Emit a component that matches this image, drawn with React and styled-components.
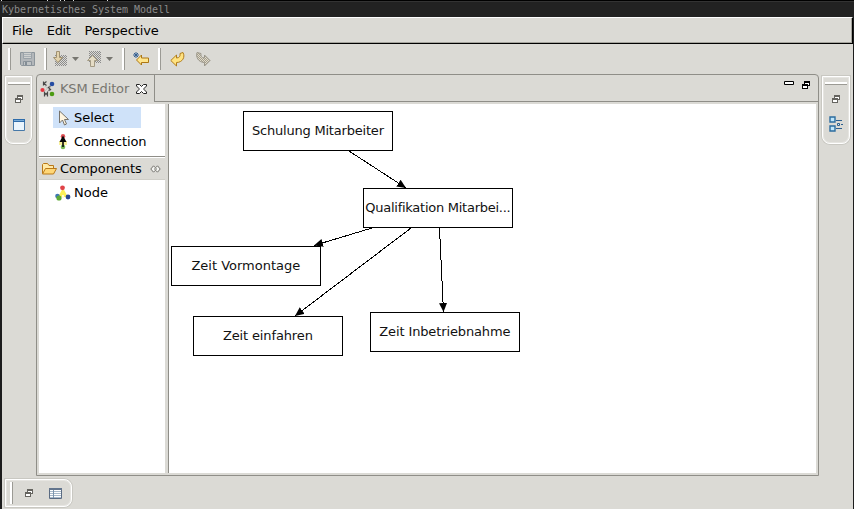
import React from "react";
import styled, { createGlobalStyle, css } from "styled-components";

const face = "#dbdad5";
const shade = "#8f8e88";

const GlobalStyle = createGlobalStyle`
  * { box-sizing: border-box; }
  body { margin: 0; overflow: hidden; background: #222; }
  svg { display: block; flex: none; }
`;

const Window = styled.div`
  width: 854px;
  height: 509px;
  display: flex;
  flex-direction: column;
  padding: 0 1px 0 2px;
  background: #1c1c1c;
  color: #000;
  font: 13px/16px "DejaVu Sans", sans-serif;
  white-space: nowrap;
`;

const TitleBar = styled.header`
  height: 17px;
  flex: none;
  margin: 0 -1px 0 -2px;
  padding: 4px 2px 0;
  box-shadow: inset 0 1px 0 #000;
  background: linear-gradient(#333 2px, #222 2px);
  color: #8b8b8b;
  font: 10px/12px "DejaVu Sans Mono", monospace;
  letter-spacing: -0.02px;
`;

/* Descender tips of the console line hidden behind the window. */
const ConsoleTips = styled.svg`
  margin: -4px 0 3px -2px;
`;

const MenuBar = styled.nav`
  height: 27px;
  flex: none;
  display: flex;
  align-items: center;
  gap: 14px;
  padding: 0 9px;
  background: ${face};
  border: 1px solid #fff;
  border-right-color: #000;
  border-bottom-color: #000;
  box-shadow: inset -1px -1px 0 #a5a49d;
`;

const MenuItem = styled.span`
  letter-spacing: ${(p) => p.$track || 0}px;
`;

const Workbench = styled.main`
  flex: 1;
  min-height: 0;
  display: flex;
  flex-direction: column;
  background: ${face};
`;

const ToolBar = styled.div`
  height: 30px;
  flex: none;
  display: flex;
  align-items: center;
  padding-left: 6px;
`;

const Separator = styled.i`
  width: 3px;
  height: 22px;
  margin-left: ${(p) => p.$before || 0}px;
  margin-right: ${(p) => p.$after}px;
  background: linear-gradient(90deg, #fff 2px, #9b9a94 2px);
`;

const ToolButton = styled.span`
  width: ${(p) => p.$width}px;
  height: 18px;
  display: flex;
  align-items: center;
  gap: 3px;
`;

const Middle = styled.div`
  height: 402px;
  flex: none;
  display: flex;
`;

const Trim = styled.aside`
  display: flex;
  flex: none;
  align-items: center;
  border: 1px solid #fff;
  box-shadow: 0 0 0 1px #c9c8c2, inset 0 0 0 1px #e6e5e1;
  ${(p) =>
    p.$horizontal
      ? css`
          width: 67px;
          height: 28px;
          margin: 3px 0 0 3px;
          padding-left: 4px;
          border-radius: 0 8px 8px 0;
        `
      : css`
          flex-direction: column;
          width: ${p.$width}px;
          height: 68px;
          margin: 2px 4px 0 3px;
          padding-top: 5px;
          border-radius: 0 0 8px 8px;
        `}
`;

const Grip = styled.i`
  flex: none;
  ${(p) =>
    p.$horizontal
      ? css`
          width: 3px;
          height: 22px;
          margin-right: 12px;
          background: linear-gradient(90deg, #fff 2px, #9b9a94 2px);
        `
      : css`
          width: 22px;
          height: 3px;
          margin-bottom: 10px;
          background: linear-gradient(#fff 2px, #9b9a94 2px);
        `}
`;

const TrimIcon = styled.span`
  margin: ${(p) => p.$margin || "0"};
`;

const Editor = styled.section`
  width: 783px;
  height: 402px;
  flex: none;
  display: flex;
  flex-direction: column;
  border: 1px solid ${shade};
  border-radius: 4px 4px 0 0;
`;

const TabStrip = styled.div`
  height: 27px;
  flex: none;
  display: flex;
`;

const Tab = styled.div`
  width: 118px;
  display: flex;
  align-items: center;
  padding-left: 3px;
  color: #77766f;
  border-right: 1px solid ${shade};
`;

const TabLabel = styled.span`
  margin: 0 6px 0 4px;
  width: 70px;
  letter-spacing: -0.15px;
`;

const TabFiller = styled.div`
  flex: 1;
  display: flex;
  justify-content: flex-end;
  gap: 8px;
  padding: 6px 8px 0 0;
  border-bottom: 1px solid ${shade};
`;

const EditorBody = styled.div`
  flex: 1;
  min-height: 0;
  display: flex;
  padding: 2px;
`;

const Palette = styled.div`
  width: 126px;
  background: #fff;
  padding-top: 3px;
`;

const PaletteItem = styled.div`
  height: ${(p) => p.$height || 21}px;
  width: ${(p) => p.$width || 110}px;
  margin-left: 14px;
  padding-left: 2px;
  display: flex;
  align-items: center;
  gap: 3px;
  letter-spacing: ${(p) => p.$track || 0}px;
  background: ${(p) => (p.$selected ? "#cfe2f9" : "transparent")};
`;

const Drawer = styled.div`
  height: 24px;
  margin: 1px 0 2px;
  padding: 1px 4px 0 2px;
  display: flex;
  align-items: center;
  background: ${face};
  border-top: 1px solid ${shade};
  border-bottom: 1px solid #cfcec8;
  box-shadow: inset 0 1px 0 #fff;
`;

const DrawerLabel = styled.span`
  flex: 1;
  margin-left: 3px;
  letter-spacing: -0.05px;
`;

const Canvas = styled.div`
  position: relative;
  width: 649px;
  margin-left: 3px;
  border-left: 1px solid ${shade};
  background: #fff;
`;

const Edges = styled.svg`
  position: absolute;
  left: 0;
  top: 0;
`;

const Node = styled.div`
  position: absolute;
  left: ${(p) => p.$x}px;
  top: ${(p) => p.$y}px;
  width: 150px;
  height: 40px;
  border: 1px solid #000;
  background: #fff;
  display: flex;
  align-items: center;
  justify-content: center;
  color: #111;
  letter-spacing: ${(p) => p.$track || 0}px;
`;

const SaveIcon = () => (
  <svg width="16" height="16" viewBox="0 0 16 16">
    <path d="M.5 1.500h14v13h-13l-1-1z" fill="#b3b7ba" stroke="#8c959b" />
    <path d="M3.500 1.500h8v6h-8z" fill="#cfd1d0" stroke="#9aa2a8" />
    <path d="M4 3.500h7M4 5.500h7" stroke="#a9b0b5" />
    <path d="M3.500 10.500h8v4h-8z" fill="#bfc3c5" stroke="#8a939a" />
    <path d="M5 11h2v3H5z" fill="#838d95" />
  </svg>
);

const Dither = ({ id, color = "#8b8b8b" }) => (
  <pattern id={id} width="2" height="2" patternUnits="userSpaceOnUse">
    <path d="M0 0h1v1H0zM1 1h1v1H1z" fill={color} />
  </pattern>
);

const ImportIcon = () => (
  <svg width="16" height="16" viewBox="0 0 16 16">
    <defs><Dither id="d1" /></defs>
    <path d="M2 4h12v11H2z" fill="url(#d1)" />
    <path d="M3.500.5h3v6h3L5 11.500.5 6.500h3z" fill="#e2d2ac" stroke="#a09171" />
  </svg>
);

const ExportIcon = () => (
  <svg width="16" height="16" viewBox="0 0 16 16">
    <defs><Dither id="d2" /></defs>
    <path d="M2 0h12v12H2z" fill="url(#d2)" />
    <path d="M3.500 15.500h4v-6h3L5.500 4.500.5 9.500h3z" fill="#e5dcc5" stroke="#a39a83" />
  </svg>
);

const DropArrow = () => (
  <svg width="7" height="4" viewBox="0 0 7 4">
    <path d="M0 0h7L3.500 4z" fill="#777670" />
  </svg>
);

const LastEditIcon = () => (
  <svg width="17" height="14" viewBox="0 0 17 14">
    <path d="M3.500 8L8.500 3v3h7v4.500h-7V13z" fill="#ffe58c" stroke="#ad7713" />
    <path d="M3 0v6M0 3h6M1 1l4 4M5 1L1 5" stroke="#345f91" />
  </svg>
);

const BackIcon = () => (
  <svg width="16" height="15" viewBox="0 0 16 15">
    <path d="M.8 8.500L6.500 3v3c3 0 4-2 3.500-4.500l3-1C15.500 5 12.500 10.500 6.500 10.500v3.500z" fill="#ffe381" stroke="#b17d1b" />
  </svg>
);

const ForwardIcon = () => (
  <svg width="16" height="15" viewBox="0 0 16 15">
    <defs><Dither id="d3" color="#a39d8d" /></defs>
    <path d="M15 8.500L9.500 3v3C6.500 6 5.500 4 6 1.500l-4-1C.5 5 3.500 10.500 9.500 10.500v3.500z" fill="#e2dccb" />
    <path d="M15 8.500L9.500 3v3C6.500 6 5.500 4 6 1.500l-4-1C.5 5 3.500 10.500 9.500 10.500v3.500z" fill="url(#d3)" stroke="#9b978b" />
  </svg>
);

const RestoreIcon = ({ color = "#65645f" }) => (
  <svg width="8" height="8" viewBox="0 0 8 8">
    <path d="M2 0h6v5H6v3H0V3h2z" fill={color} />
    <path d="M3 2h4v2H6V3H3zM1 5h4v2H1z" fill="#fff" />
  </svg>
);

const MinimizeIcon = () => (
  <svg width="10" height="4" viewBox="0 0 10 4">
    <path d="M.5.5h9v3h-9z" fill="#fff" stroke="#000" />
  </svg>
);

const ViewIcon = () => (
  <svg width="12" height="12" viewBox="0 0 12 12">
    <path d="M.5.5h11v11H.5z" fill="#eaf5fd" stroke="#4779a8" />
    <path d="M0 0h12v3H0z" fill="#2e6caa" />
    <path d="M1 1.500h10" stroke="#78acd8" />
  </svg>
);

const OutlineIcon = () => (
  <svg width="14" height="16" viewBox="0 0 14 16">
    <path d="M1 1h5v5H1zM1 10h5v5H1z" fill="#bfe6fb" stroke="#2c6c9f" strokeWidth="1.400" />
    <path d="M7 4.500h6M7 12.500h6M12 8.500h2" stroke="#2c5f8e" />
    <path d="M8.500 7.500h2v2h-2z" fill="#d8effb" stroke="#2c5f8e" />
  </svg>
);

const TableIcon = () => (
  <svg width="13" height="11" viewBox="0 0 13 11">
    <path d="M.5.5h12v10H.5z" fill="#fff" stroke="#5a6b82" />
    <path d="M0 0h13v2H0z" fill="#63758d" />
    <path d="M1 3.500h11M1 5.500h11M1 7.500h11M1 9.500h11" stroke="#a7b9ca" />
    <path d="M4.500 2v8" stroke="#7c95ad" />
  </svg>
);

const KsmIcon = () => (
  <svg width="16" height="16" viewBox="0 0 16 16">
    <path d="M5 5l6 5M5 10l5-6" stroke="#b5b5b5" strokeWidth=".7" />
    <path d="M3.500.5v4M6.500.500L4 2.500l2.500 2M4.500 15.500v-4l1.500 2 1.500-2v4M10.500 5.500l-2 1 2 2-2 1" fill="none" stroke="#474747" strokeWidth="1.200" />
    <circle cx="2.500" cy="9" r="2.100" fill="#e43540" />
    <circle cx="12" cy="3" r="2.300" fill="#264da3" />
    <circle cx="12" cy="13" r="2.300" fill="#4c9b13" />
  </svg>
);

const CloseIcon = () => (
  <svg width="11" height="10" viewBox="0 0 11 10">
    <path d="M.5.500h3l2 2 2-2h3v1.500L8 4.500v1l2.500 2.500v1.500h-3l-2-2-2 2h-3V8L3 5.500v-1L.5 2z" fill="#fff" stroke="#222" />
  </svg>
);

const CursorIcon = () => (
  <svg width="16" height="16" viewBox="0 0 16 16">
    <path d="M4.500 1v12l3-3 2 5 2-1-2-4.500h4z" fill="#fff5df" stroke="#77736b" />
  </svg>
);

const ConnectionIcon = () => (
  <svg width="16" height="16" viewBox="0 0 16 16">
    <path d="M4 7h8v4H4z" fill="#f8f09a" />
    <circle cx="8" cy="2.300" r="2.200" fill="#e25358" />
    <circle cx="8" cy="13" r="2.300" fill="#7dbb58" />
    <path d="M8 1.500l3.500 6.500h-7zM7.200 7h1.600v6H7.200z" fill="#080808" />
  </svg>
);

const NodeIcon = () => (
  <svg width="16" height="16" viewBox="0 0 16 16">
    <path d="M8 3L3 12h10z" fill="#fbef3b" opacity=".85" />
    <circle cx="7.500" cy="2.800" r="2.400" fill="#e04348" />
    <circle cx="2.500" cy="11" r="2.300" fill="#3f78b4" />
    <circle cx="4" cy="13" r="2.600" fill="#5eaa35" />
    <circle cx="13" cy="12" r="2.400" fill="#28488f" />
    <path d="M7 10h2v3H7z" fill="#fffbd5" />
  </svg>
);

const FolderIcon = () => (
  <svg width="16" height="14" viewBox="0 0 16 14">
    <path d="M1.500 11.500v-9l1-1h4l1.500 2h4.500v3" fill="#ffe9a6" stroke="#b97818" />
    <path d="M1.500 12l3-5.500h11L12.500 12z" fill="#ffd777" stroke="#b97818" />
  </svg>
);

const PinIcon = () => (
  <svg width="11" height="8" viewBox="0 0 11 8" fill="#f5f5f2" stroke="#73726d">
    <path d="M3.500.8L.8 4l2.700 3.200 2-2 2 2L10.200 4 7.500.8l-2 2zM4 4h3" />
  </svg>
);

const nodes = [
  { label: "Schulung Mitarbeiter", x: 74, y: 7, track: -0.2 },
  { label: "Qualifikation Mitarbei...", x: 194, y: 84, track: -0.26 },
  { label: "Zeit Vormontage", x: 2, y: 142, track: 0 },
  { label: "Zeit einfahren", x: 24, y: 212, track: -0.13 },
  { label: "Zeit Inbetriebnahme", x: 201, y: 208, track: -0.13 },
];

const edges = [
  [180, 47, 237, 84],
  [203, 124, 145, 141.500],
  [242, 124, 126, 212],
  [270.500, 124, 274.500, 208],
];

export default function App() {
  return (
    <>
      <GlobalStyle />
      <Window>
        <TitleBar>
          <ConsoleTips width="120" height="1">
            <path d="M1 0h1v1h-1zM47 0h1v1h-1zM60 0h1v1h-1zM64 0h1v1h-1zM73 0h1v1h-1zM107 0h1v1h-1z" fill="#ddd" />
          </ConsoleTips>
          Kybernetisches System Modell
        </TitleBar>
        <MenuBar>
          <MenuItem $track={-0.25}>File</MenuItem>
          <MenuItem $track={-0.35}>Edit</MenuItem>
          <MenuItem $track={-0.1}>Perspective</MenuItem>
        </MenuBar>
        <Workbench>
          <ToolBar>
            <Separator $after={9} />
            <ToolButton $width={16}><SaveIcon /></ToolButton>
            <Separator $before={8} $after={6} />
            <ToolButton $width={34}><ImportIcon /><DropArrow /></ToolButton>
            <ToolButton $width={35}><ExportIcon /><DropArrow /></ToolButton>
            <Separator $after={8} />
            <ToolButton $width={17}><LastEditIcon /></ToolButton>
            <Separator $before={8} $after={9} />
            <ToolButton $width={25}><BackIcon /></ToolButton>
            <ToolButton $width={16}><ForwardIcon /></ToolButton>
          </ToolBar>
          <Middle>
            <Trim $width={27}>
              <Grip />
              <RestoreIcon />
              <TrimIcon $margin="16px 0 0"><ViewIcon /></TrimIcon>
            </Trim>
            <Editor>
              <TabStrip>
                <Tab>
                  <KsmIcon />
                  <TabLabel>KSM Editor</TabLabel>
                  <CloseIcon />
                </Tab>
                <TabFiller>
                  <MinimizeIcon />
                  <RestoreIcon color="#000" />
                </TabFiller>
              </TabStrip>
              <EditorBody>
                <Palette>
                  <PaletteItem $selected $width={88}><CursorIcon />Select</PaletteItem>
                  <PaletteItem $height={27} $track={-0.12}><ConnectionIcon />Connection</PaletteItem>
                  <Drawer>
                    <FolderIcon />
                    <DrawerLabel>Components</DrawerLabel>
                    <PinIcon />
                  </Drawer>
                  <PaletteItem><NodeIcon />Node</PaletteItem>
                </Palette>
                <Canvas>
                  {nodes.map((n) => (
                    <Node key={n.label} $x={n.x} $y={n.y} $track={n.track}>{n.label}</Node>
                  ))}
                  <Edges width="648" height="369">
                    <defs>
                      <marker id="head" markerUnits="userSpaceOnUse" markerWidth="10" markerHeight="10" refX="9" refY="4.500" orient="auto">
                        <path d="M0 .5v8l9-4z" />
                      </marker>
                    </defs>
                    {edges.map(([x1, y1, x2, y2]) => (
                      <line key={x2} x1={x1} y1={y1} x2={x2} y2={y2} stroke="#000" shapeRendering="crispEdges" markerEnd="url(#head)" />
                    ))}
                  </Edges>
                </Canvas>
              </EditorBody>
            </Editor>
            <Trim $width={28}>
              <Grip />
              <RestoreIcon />
              <TrimIcon $margin="13px 0 0"><OutlineIcon /></TrimIcon>
            </Trim>
          </Middle>
          <Trim $horizontal>
            <Grip $horizontal />
            <RestoreIcon />
            <TrimIcon $margin="0 0 0 16px"><TableIcon /></TrimIcon>
          </Trim>
        </Workbench>
      </Window>
    </>
  );
}
